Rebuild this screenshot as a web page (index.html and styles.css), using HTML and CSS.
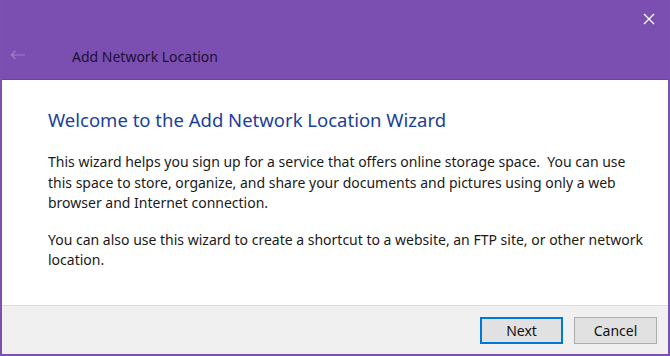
FILE: index.html
```html
<!DOCTYPE html>
<html lang="en">
<head>
  <meta charset="UTF-8">
  <title>Add Network Location</title>
  <link rel="stylesheet" href="styles.css">
</head>
<body>
  <div class="window">
    <div class="titlebar">
      <div class="caption-row">
        <span class="close" title="Close">
          <svg width="12" height="12" viewBox="0 0 12 12"><path d="M1 1L11 11M11 1L1 11" stroke="#fff" stroke-width="1.3" fill="none"/></svg>
        </span>
      </div>
      <div class="nav-row">
        <span class="back">
          <svg width="16" height="10" viewBox="0 0 16 10"><path d="M15 5H1.5M5.5 1L1.5 5L5.5 9" stroke="#9c80c8" stroke-width="1.2" fill="none"/></svg>
        </span>
        <span class="wizard-title">Add Network Location</span>
      </div>
    </div>

    <!-- wizard page -->
    <div class="content">
      <h1 class="heading">Welcome to the Add Network Location Wizard</h1>
      <p>This wizard helps you sign up for a service that offers online storage space.&nbsp; You can use this space to store, organize, and share your documents and pictures using only a web browser and Internet connection.</p>
      <p>You can also use this wizard to create a shortcut to a website, an FTP site, or other network location.</p>
    </div>

    <div class="footer">
      <button class="btn btn-default">Next</button>
      <button class="btn">Cancel</button>
    </div>
  </div>
</body>
</html>
```

FILE: styles.css
```css
body {
  margin: 0;
  padding: 0;
  font-family: 'Noto Sans', 'Open Sans', sans-serif;
  background: #fff;
}

.window {
  height: 356px;
  box-sizing: border-box;
  display: flex;
  flex-direction: column;
  border-left: 2px solid #7b50b2;
  border-right: 2px solid #7b50b2;
  border-bottom: 2px solid #7b50b2;
}

.titlebar {
  height: 80px;
  background: #7b4fb1;
  display: flex;
  flex-direction: column;
  border-bottom: 1px solid #6c42a3;
  box-sizing: border-box;
}

.caption-row {
  height: 38px;
  display: flex;
  justify-content: flex-end;
  align-items: center;
}

.close {
  display: flex;
  width: 30px;
  justify-content: center;
  margin-right: 4px;
}

.nav-row {
  display: flex;
  align-items: center;
  height: 36px;
}

.back {
  display: flex;
  width: 34px;
  padding-left: 8px;
  margin-top: -2px;
}

.wizard-title {
  margin-left: 28px;
  font-size: 14px;
  color: #1d0f33;
}

.content {
  flex: 1;
  padding: 27px 18px 0 46px;
  color: #1a1a1a;
}

.heading {
  margin: 0 0 20px 0;
  font-size: 18.5px;
  font-weight: normal;
  color: #1c3f98;
}

.content p {
  margin: 0 0 16px 0;
  font-size: 14px;
  line-height: 20.5px;
}

.footer {
  height: 48px;
  background: #f0f0f0;
  border-top: 1px solid #dcdcdc;
  display: flex;
  justify-content: flex-end;
  align-items: center;
  gap: 11px;
  padding-right: 11px;
}

.btn {
  width: 83px;
  height: 27px;
  font-family: 'Noto Sans', sans-serif;
  font-size: 14px;
  background: #e1e1e1;
  color: #111;
  border: 1px solid #adadad;
  padding: 0;
}

.btn-default {
  border: 2px solid #0078d7;
}
```
